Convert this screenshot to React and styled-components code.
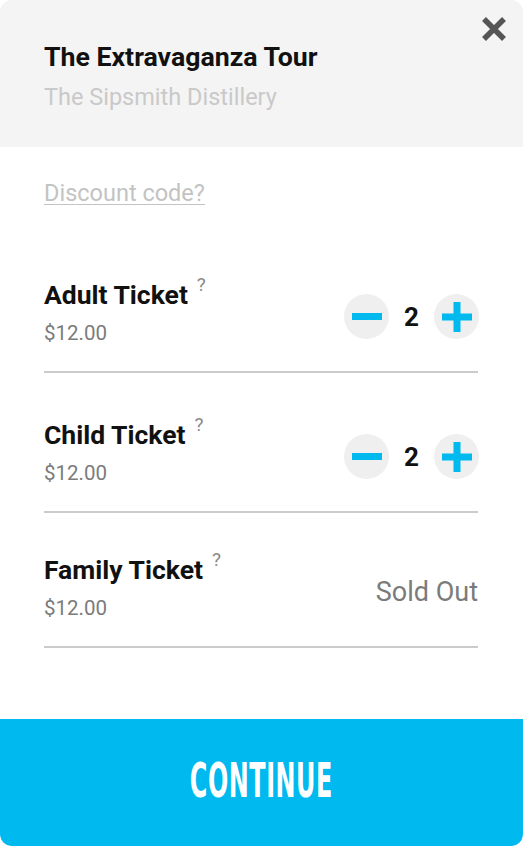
import React from "react";
import styled, { createGlobalStyle } from "styled-components";

const Global = createGlobalStyle`
  html, body { margin: 0; padding: 0; background: #ffffff; }
  body { font-family: Roboto, "Noto Sans", Arial, sans-serif; -webkit-font-smoothing: antialiased; }
  * { box-sizing: border-box; }
`;

const Card = styled.div`
  width: 523px;
  min-height: 846px;
  border-radius: 12px;
  overflow: hidden;
  display: flex;
  flex-direction: column;
  background: #fff;
`;

const Header = styled.header`
  position: relative;
  height: 147px;
  background: #f4f4f4;
  padding: 41px 44px 0;
`;

const Title = styled.h1`
  margin: 0;
  font-size: 26.7px;
  line-height: 32px;
  font-weight: 700;
  color: #111;
`;

const Subtitle = styled.p`
  margin: 10px 0 0;
  font-size: 23.5px;
  line-height: 28px;
  color: #c9c9c9;
`;

const CloseButton = styled.button`
  position: absolute;
  top: 16px;
  right: 15px;
  width: 28px;
  height: 26px;
  padding: 0;
  border: 0;
  background: none;
  display: flex;
  align-items: center;
  justify-content: center;
  cursor: pointer;
`;

const Body = styled.main`
  flex: 1;
  padding: 32px 45px 0 44px;
`;

const DiscountLink = styled.a`
  display: inline-block;
  font-size: 23.5px;
  line-height: 28px;
  color: #c3c3c3;
  text-decoration: underline;
  text-underline-offset: 3px;
  text-decoration-thickness: 1px;
`;

const List = styled.div`
  margin-top: 26px;
`;

const Row = styled.div`
  display: flex;
  align-items: center;
  justify-content: space-between;
  padding: ${(p) => (p.$tight ? "42px 0 26px" : "47px 0 26px")};
  border-bottom: 2px solid #cbcbcb;
`;

const Info = styled.div`
  display: flex;
  flex-direction: column;
  gap: 11px;
`;

const Name = styled.div`
  font-size: 26.5px;
  line-height: 30px;
  font-weight: 700;
  color: #111;
  display: flex;
  align-items: flex-start;
`;

const Help = styled.span`
  font-size: 19px;
  line-height: 19px;
  font-weight: 400;
  color: #8a8a8a;
  margin-left: 9px;
  margin-top: -5px;
`;

const Price = styled.div`
  font-size: 20.5px;
  line-height: 24px;
  color: #7b7b7b;
`;

const Stepper = styled.div`
  display: flex;
  align-items: center;
  margin-top: 8px;
  margin-right: -1px;
`;

const RoundButton = styled.button`
  width: 45px;
  height: 45px;
  border-radius: 50%;
  border: 0;
  padding: 0;
  background: #efefef;
  display: flex;
  align-items: center;
  justify-content: center;
  cursor: pointer;
`;

const Count = styled.span`
  width: 45px;
  text-align: center;
  font-size: 26px;
  font-weight: 700;
  color: #111;
`;

const SoldOut = styled.span`
  align-self: flex-start;
  margin-top: 21px;
  font-size: 27px;
  line-height: 32px;
  color: #7b7b7b;
`;

const Continue = styled.button`
  height: 127px;
  width: 100%;
  border: 0;
  background: #00b9ef;
  border-radius: 0 0 10px 10px;
  display: flex;
  align-items: center;
  justify-content: center;
  cursor: pointer;
  padding: 0 0 6px;
`;

const ContinueLabel = styled.span`
  display: inline-block;
  font-family: "DejaVu Sans Condensed", "DejaVu Sans", sans-serif;
  font-stretch: condensed;
  font-weight: 700;
  font-size: 48px;
  line-height: 1;
  color: #fff;
  transform: scaleX(0.553);
  letter-spacing: 1px;
`;

const Minus = () => (
  <svg width="30" height="7" viewBox="0 0 30 7">
    <rect x="0" y="0" width="30" height="7" fill="#00b9ef" />
  </svg>
);

const Plus = () => (
  <svg width="30" height="30" viewBox="0 0 30 30">
    <rect x="0" y="11.5" width="30" height="7" fill="#00b9ef" />
    <rect x="11.5" y="0" width="7" height="30" fill="#00b9ef" />
  </svg>
);

const CloseIcon = () => (
  <svg width="26" height="24" viewBox="0 0 26 24">
    <path d="M3 2 L23 22 M23 2 L3 22" stroke="#555" strokeWidth="5.5" />
  </svg>
);

const tickets = [
  { name: "Adult Ticket", price: "$12.00", count: 2 },
  { name: "Child Ticket", price: "$12.00", count: 2 },
  { name: "Family Ticket", price: "$12.00", soldOut: true },
];

export default function App() {
  return (
    <>
      <Global />
      <Card>
        <Header>
          <Title>The Extravaganza Tour</Title>
          <Subtitle>The Sipsmith Distillery</Subtitle>
          <CloseButton aria-label="Close">
            <CloseIcon />
          </CloseButton>
        </Header>
        <Body>
          <DiscountLink href="#">Discount code?</DiscountLink>
          <List>
            {tickets.map((t) => (
              <Row key={t.name} $tight={t.soldOut}>
                <Info>
                  <Name>
                    {t.name}
                    <Help>?</Help>
                  </Name>
                  <Price>{t.price}</Price>
                </Info>
                {t.soldOut ? (
                  <SoldOut>Sold Out</SoldOut>
                ) : (
                  <Stepper>
                    <RoundButton aria-label="Decrease">
                      <Minus />
                    </RoundButton>
                    <Count>{t.count}</Count>
                    <RoundButton aria-label="Increase">
                      <Plus />
                    </RoundButton>
                  </Stepper>
                )}
              </Row>
            ))}
          </List>
        </Body>
        <Continue>
          <ContinueLabel>CONTINUE</ContinueLabel>
        </Continue>
      </Card>
    </>
  );
}
